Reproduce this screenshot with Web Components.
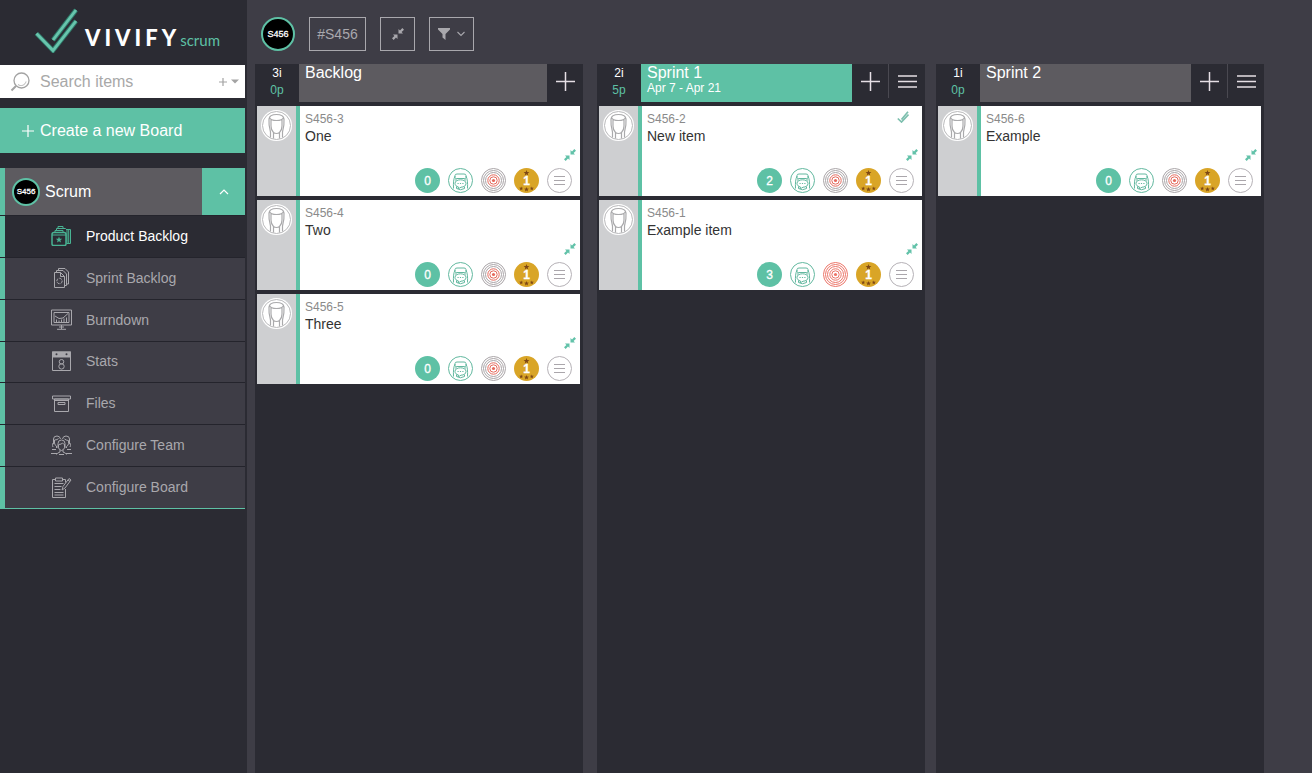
<!DOCTYPE html>
<html lang="en">
<head>
<meta charset="utf-8">
<title>VivifyScrum - Product Backlog</title>
<style>
  :root {
    --ground: #3e3d46;
    --dark: #2b2b33;
    --slate: #5d5b60;
    --green: #5ec1a5;
    --line: #24242c;
    --muted: #a9a8ad;
  }
  body { margin: 0; background: var(--ground); color: #fff; font: 14px/18px "Liberation Sans", Arial, sans-serif; }
</style>
</head>
<body>
<vs-app>
  <vs-sidebar slot="sidebar">
    <vs-nav-item icon="backlog" active>Product Backlog</vs-nav-item>
    <vs-nav-item icon="sprint">Sprint Backlog</vs-nav-item>
    <vs-nav-item icon="burndown">Burndown</vs-nav-item>
    <vs-nav-item icon="stats">Stats</vs-nav-item>
    <vs-nav-item icon="files">Files</vs-nav-item>
    <vs-nav-item icon="team">Configure Team</vs-nav-item>
    <vs-nav-item icon="board">Configure Board</vs-nav-item>
  </vs-sidebar>
  <vs-toolbar></vs-toolbar>
  <vs-board>
    <vs-column class="backlog" items="3i" points="0p">
      <span slot="title">Backlog</span>
      <vs-card code="S456-3" count="0">One</vs-card>
      <vs-card code="S456-4" count="0">Two</vs-card>
      <vs-card code="S456-5" count="0">Three</vs-card>
    </vs-column>
    <vs-column items="2i" points="5p" current menu>
      <span slot="title">Sprint 1</span>
      <span slot="dates">Apr 7 - Apr 21</span>
      <vs-card code="S456-2" count="2" done>New item</vs-card>
      <vs-card code="S456-1" count="3" high>Example item</vs-card>
    </vs-column>
    <vs-column items="1i" points="0p" menu>
      <span slot="title">Sprint 2</span>
      <vs-card code="S456-6" count="0">Example</vs-card>
    </vs-column>
  </vs-board>
</vs-app>

<script>
const STAR = (x, y, r) => {
  let p = '';
  for (let i = 0; i < 10; i++) {
    const a = -Math.PI / 2 + i * Math.PI / 5, q = i % 2 ? r * 0.42 : r;
    p += (i ? 'L' : 'M') + (x + q * Math.cos(a)).toFixed(2) + ' ' + (y + q * Math.sin(a)).toFixed(2);
  }
  return p + 'Z';
};

const rings = (outer, inner) => `<circle cx="12.5" cy="12.5" r="12" stroke="${outer}"/><circle cx="12.5" cy="12.5" r="10" stroke="${outer}"/><circle cx="12.5" cy="12.5" r="8" stroke="${outer}"/><circle cx="12.5" cy="12.5" r="5.7" stroke="${inner}"/><circle cx="12.5" cy="12.5" r="3.7" stroke="${inner}"/><circle cx="12.5" cy="12.5" r="1.6" fill="${inner}" stroke="none"/>`;

const ICONS = {
  mark: [44, 46, '<path d="M2.5 26.5 19 43.5 42 14M19 33 42 3" stroke="#2f7d6c" stroke-width="4.600"/><path d="M2.5 26.5 19 43.5 42 14M19 33 42 3" stroke="#68c5ad" stroke-width="2.8"/>'],
  search: [20, 20, '<circle cx="11.5" cy="8.5" r="7.5" stroke-width="1.3"/><path d="M6 14 1.5 18.5" stroke-width="2"/><path d="M8 12.5a5 5 0 0 0 8-3" stroke-width=".8"/>'],
  smallplus: [8, 8, '<path d="M4 0v8M0 4h8" stroke-width="1.2"/>'],
  caret: [8, 5, '<path d="M0 .5h8L4 4.5Z" fill="currentColor" stroke="none"/>'],
  createplus: [12, 12, '<path d="M6 0v12M0 6h12" stroke-width="1.2"/>'],
  up: [10, 6, '<path d="m1 5 4-4 4 4" stroke-width="1.2"/>'],
  down: [8, 6, '<path d="m.5 1 3.5 3.5L7.500 1" stroke-width="1.1"/>'],
  plus: [19, 19, '<path d="M9.500 0v19M0 9.500h19" stroke-width="1.5"/>'],
  menu: [19, 13, '<path d="M0 1h19M0 6.500h19M0 12h19" stroke-width="1.7"/>'],
  filter: [12, 12, '<path d="M0 0h12v1.500L7.500 6v6L4.500 9.500V6L0 1.500Z" fill="currentColor" stroke="none"/>'],
  shrink: [12, 12, '<path d="M6.500 5.500V1l1.500 1.400L10.300 0 12 1.700 9.600 4 11 5.500ZM5.500 6.500V11L4 9.600 1.700 12 0 10.300 2.400 8 1 6.500Z" fill="currentColor" stroke="none"/>'],
  check: [12, 12, '<path d="M.8 7.500 4.500 11 11.500 3.500M4.500 8.500 11 .8" stroke="#7dbfae" stroke-width="1.700"/>'],
  backlog: [21, 21, '<path d="M7 3V1.500h5V3M5.500 6V3.500h9l1.500 1.500v13.500M15.500 4.500h4v14h-4M17.700 4.500v14"/><path d="M1 9.500q0-2 2-2h10q2 0 2 2v9.500q0 1.500-1.500 1.500h-11Q1 20.500 1 19Z" stroke-width="1.500"/><path d="M4 7.500V5.500h8v2M1 10h14"/><path d="' + STAR(8, 14.800, 3.400) + '" fill="currentColor" stroke="none"/>'],
  sprint: [21, 21, '<path d="M3.500 5.500h6l4 4v11h-10ZM9.500 5.500v4h4M5.500 5V3.500h6.500l3.500 3.500v11.500h-1.500M7.500 3V1.500h6.500l3.500 3.500v12h-1.500"/><circle cx="8.500" cy="14" r="2.700" stroke-dasharray="3 1"/>'],
  burndown: [21, 21, '<path d="M.5 1h20v15H.5ZM3 3.500h15v10H3ZM10.500 16v4M6 20.300h9M8 18h5"/><path d="m4 7 4 2.500 4-.5 5-4.500M5.500 10.500v3M8 11.500v2M10.500 10.500v3M13 9.500v4M15.500 8.500v5"/>'],
  stats: [21, 21, '<path d="M1.500 1h18v18.500h-18Z"/><path d="M1 .500h19v6H1Z" fill="currentColor" stroke="none"/><circle cx="5.500" cy="3.300" r="1" fill="#3e3d46" stroke="none"/><circle cx="15.500" cy="3.300" r="1" fill="#3e3d46" stroke="none"/><circle cx="10.500" cy="10.800" r="2.300"/><circle cx="10.500" cy="15.400" r="2.700"/>'],
  files: [21, 21, '<path d="M1.500 3h18v3h-18ZM3.500 6h14v12.500h-14ZM7 9.500h7v2H7ZM4 7.500h13"/>'],
  team: [21, 21, '<path d="M2.500 9V4q0-3 3.500-3 3 0 3.500 3M3.500 5q3 0 4-1.500M3.500 5v3q0 2 2 3v2M2 8q-1 3 0 4M11.500 4q.5-3 3.500-3 3.500 0 3.500 3v5M13.500 4q2 1.500 4 1.500v3q0 2-2 3V13M19 8q1 3 0 4"/><path d="M7 13V8.500Q7 5 10.500 5T14 8.500V13M7.500 9.500q3 0 4-1.500 1 1.500 2.500 1.500M7.500 10v2.500q0 2 3 3 3-1 3-3V10M9 15v2q-3 1-3.500 2.500M12 15v2q3 1 3.500 2.500M0 18.500h6M15 18.500h6M1 14.500h4M16 14.500h4M8 19.500h5"/>'],
  board: [21, 21, '<path d="M4.500 2.500H1.500v18h13V12M11.500 2.500h3v3M4.500 1h7v3h-7ZM3.500 6.500h9M3.500 9.500h7M3.500 12.500h6M3.500 15.500h9M3.500 18h9"/><path d="m11 13 1-3.500 6-8 2 1.500-6 8ZM17 3l2 1.500"/>'],
  person: [31, 31, '<circle cx="15.500" cy="15.500" r="15.500" fill="#fff" stroke="none"/><circle cx="15.500" cy="15.500" r="14" stroke="#b9b9bb"/><path d="M9.500 27.500V22Q7.500 15 8 9q.5-4.500 7.500-4.500T23 9q.5 6-1.500 13v5.500M8.500 7.500q1 3 7 3t7-3M10 10v6q0 4 2.500 6.500v6M21 10v6q0 4-2.500 6.500v6M12.500 22.500q3 2 6 0" stroke="#aaaaac" stroke-width="1.200"/>'],
  talk: [25, 25, '<circle cx="12.500" cy="12.500" r="12" fill="#fff"/><path d="M7 7.500Q7 6 9 6h7q2 0 2 1.500v2q0 1-1.500 1h-8Q7 10.500 7 9.500ZM7 8Q5 12 5.500 20.500M18 8q2 4 1.500 12.500M8 10.500V13M17 10.500V13M8.500 18.500v2q4 2.500 8 0v-2"/><path d="M12.500 11.800c3.300 0 5.500 1.500 5.500 3.700s-2.200 3.700-5 3.700c-1 .8-2 1.300-3 1.300l.5-1.500c-2.200-.5-3.500-1.800-3.500-3.500 0-2.200 2.200-3.700 5.500-3.700Z" fill="#fff"/><path d="M9.500 15.500h1.200M11.900 15.500h1.200M14.300 15.500h1.200"/>'],
  target: [25, 25, rings('#a9a4a7', '#e5695c')],
  targethigh: [25, 25, rings('#ec7468', '#ec7468')],
  medal: [25, 25, `<circle cx="12.5" cy="12.5" r="12.5" fill="#d9a527" stroke="none"/><path d="${STAR(12.500, 5, 3)}${STAR(12.500, 21.500, 2.600)}${STAR(7.200, 20.500, 2.100)}${STAR(17.800, 20.500, 2.100)}" fill="#7d4716" stroke="none"/>`],
  list: [25, 25, '<circle cx="12.500" cy="12.500" r="12" stroke="#b5b1b6" fill="#fff"/><path d="M7 8.500h11M7 12.500h11M7 16.500h11" stroke="#aaa6ab"/>']
};

const RESET = `
  :host, *, *::before, *::after { box-sizing: border-box; }
  button { margin: 0; padding: 0; border: 0; background: none; color: inherit; font: inherit; cursor: pointer; }
  a { color: inherit; text-decoration: none; }
`;

const define = (name, css, html) => customElements.define(name, class extends HTMLElement {
  connectedCallback() {
    if (this.shadowRoot) return;
    const root = this.attachShadow({ mode: 'open' });
    const tpl = document.createElement('template');
    tpl.innerHTML = `<style>${RESET}${css}</style>${html(this)}`;
    root.append(tpl.content.cloneNode(true));
  }
});

define('vs-icon', `
  :host { display: block; flex: none; }
  svg { display: block; fill: none; stroke: currentColor; }
`, el => {
  const [w, h, body] = ICONS[el.getAttribute('name')];
  return `<svg width="${w}" height="${h}" viewBox="0 0 ${w} ${h}" aria-hidden="true">${body}</svg>`;
});

define('vs-badge', `
  :host { display: flex; flex: none; align-items: center; justify-content: center; width: 34px; height: 34px;
    border: 2px solid var(--green); border-radius: 50%; background: #000; color: #fff; font-size: 9px; line-height: 12px; -webkit-text-stroke: .3px #fff; }
  :host([small]) { width: 28px; height: 28px; font-size: 8px; }
`, () => `<slot></slot>`);

define('vs-app', `
  :host { display: grid; grid-template-columns: 247px minmax(0, 1fr); min-height: 100vh; }
  main { display: flex; flex-direction: column; min-width: 0; }
`, () => `<slot name="sidebar"></slot><main><slot></slot></main>`);

define('vs-sidebar', `
  :host { display: block; padding-right: 2px; background: var(--dark); }
  .logo { display: flex; align-items: flex-start; gap: 7px; height: 65px; padding: 7px 0 0 34px; }
  .word { display: flex; align-items: baseline; padding-top: 15px; font-family: Lato, sans-serif; line-height: 32px; }
  .word b { font-size: 22px; font-weight: 900; letter-spacing: 4px; }
  .word span { color: var(--green); font-size: 15px; }
  .search { display: flex; align-items: center; height: 33px; padding: 0 6px 0 10px; background: #fff; color: #a3a3a3; }
  input { flex: 1; min-width: 0; height: 33px; margin-left: 10px; padding: 0; border: 0; outline: 0; background: none; color: #555; font: 16px/20px "Liberation Sans", Arial, sans-serif; }
  input::placeholder { color: #a8a8a8; opacity: 1; }
  .more { display: flex; align-items: center; gap: 4px; height: 33px; }
  .create { display: flex; align-items: center; gap: 6px; width: 100%; height: 45px; margin: 10px 0 15px; padding-left: 22px; background: var(--green); font-size: 16px; }
  .board { display: flex; height: 47px; border-left: 5px solid var(--green); background: var(--slate); }
  .name { display: flex; flex: 1; align-items: center; gap: 5px; padding-left: 7px; font-size: 16px; }
  .toggle { display: flex; align-items: center; justify-content: center; width: 43px; background: var(--green); }
  nav { display: grid; grid-auto-rows: 1fr; min-height: 294px; border-bottom: 1px solid var(--green); }
`, () => `
  <a class="logo" href="#home" aria-label="Vivify scrum">
    <vs-icon name="mark"></vs-icon>
    <span class="word"><b>VIVIFY</b><span>scrum</span></span>
  </a>
  <div class="search">
    <vs-icon name="search"></vs-icon>
    <input type="text" placeholder="Search items" aria-label="Search items">
    <button class="more" aria-label="Search options"><vs-icon name="smallplus"></vs-icon><vs-icon name="caret"></vs-icon></button>
  </div>
  <button class="create"><vs-icon name="createplus"></vs-icon>Create a new Board</button>
  <div class="board">
    <a class="name" href="#scrum"><vs-badge small>S456</vs-badge>Scrum</a>
    <button class="toggle" aria-label="Collapse board menu"><vs-icon name="up"></vs-icon></button>
  </div>
  <nav><slot></slot></nav>`);

define('vs-nav-item', `
  :host { display: block; border-top: 1px solid var(--line); background: var(--ground); color: var(--muted); }
  :host([active]) { background: var(--dark); color: #fff; }
  a { display: flex; align-items: center; gap: 14px; height: 100%; padding: 0 0 1px 46px; border-left: 5px solid var(--green); }
  :host([active]) vs-icon { color: #48b393; }
`, el => `<a href="#${el.getAttribute('icon')}"><vs-icon name="${el.getAttribute('icon')}"></vs-icon><slot></slot></a>`);

define('vs-toolbar', `
  :host { display: flex; align-items: flex-start; gap: 14px; height: 64px; padding: 17px 14px 0; color: #a9a8ad; }
  button { display: flex; align-items: center; justify-content: center; gap: 7px; height: 34px; border: 1px solid #a9a8ad; }
  .tag { width: 57px; }
  .fit { width: 35px; }
  .filter { width: 45px; }
`, () => `
  <vs-badge>S456</vs-badge>
  <button class="tag">#S456</button>
  <button class="fit" aria-label="Collapse all"><vs-icon name="shrink"></vs-icon></button>
  <button class="filter" aria-label="Filter"><vs-icon name="filter"></vs-icon><vs-icon name="down"></vs-icon></button>`);

define('vs-board', `
  :host { display: flex; flex: 1; gap: 11px; padding: 0 48px 0 8px; }
  ::slotted(vs-column) { flex: 1 1 0; }
  ::slotted(.backlog) { margin-right: 3px; }
`, () => `<slot></slot>`);

define('vs-column', `
  :host { display: flex; flex-direction: column; min-width: 0; background: var(--dark); }
  header { display: flex; align-items: flex-start; height: 38px; margin-bottom: 4px; }
  .sum { width: 44px; padding-top: 1px; font-size: 12px; line-height: 17px; text-align: center; }
  .sum div + div { color: var(--green); }
  .title { flex: 1; min-width: 0; height: 38px; padding-left: 6px; background: var(--slate); }
  :host([current]) .title { background: var(--green); }
  h2 { margin: 0; font-size: 16px; font-weight: 400; line-height: 18px; }
  .dates { font-size: 12px; line-height: 12px; }
  button { display: flex; align-items: center; justify-content: center; width: 36px; height: 34px; color: #e6dfe5; }
  .menu { width: 37px; border-left: 1px solid #4a4951; }
  .cards { display: flex; flex-direction: column; gap: 4px; padding: 0 3px 0 2px; }
`, el => `
  <header>
    <div class="sum"><div>${el.getAttribute('items')}</div><div>${el.getAttribute('points')}</div></div>
    <div class="title"><h2><slot name="title"></slot></h2><div class="dates"><slot name="dates"></slot></div></div>
    <button aria-label="Add item"><vs-icon name="plus"></vs-icon></button>
    ${el.hasAttribute('menu') ? '<button class="menu" aria-label="Sprint menu"><vs-icon name="menu"></vs-icon></button>' : ''}
  </header>
  <div class="cards"><slot></slot></div>`);

define('vs-card', `
  :host { display: flex; height: 90px; background: #fff; color: #333; }
  .who { width: 43px; padding: 4px 0 0 4px; border-right: 4px solid var(--green); background: #cecfd1; }
  .body { display: flex; flex: 1; flex-direction: column; min-width: 0; padding: 5px 0 3px 5px; }
  .top { display: flex; justify-content: space-between; padding-right: 13px; color: #8a8a8a; font-size: 12px; line-height: 16px; }
  h3 { margin: 0; font-size: 14px; font-weight: 400; line-height: 18px; }
  .fit { align-self: flex-end; margin: 4px 4px auto 0; color: #62c2a9; }
  .tools { display: flex; justify-content: flex-end; gap: 8px; padding-right: 8px; color: #62b89f; }
  .tools button { display: grid; place-items: center; width: 25px; height: 25px; border-radius: 50%; }
  .count { background: var(--green); }
  .count, .rank { color: #fff; font-size: 12px; line-height: 14px; -webkit-text-stroke: .3px #fff; }
  .rank > * { grid-area: 1 / 1; }
  .rank span { z-index: 1; font-weight: 700; }
`, el => `
  <div class="who"><vs-icon name="person"></vs-icon></div>
  <div class="body">
    <div class="top"><span>${el.getAttribute('code')}</span>${el.hasAttribute('done') ? '<vs-icon name="check"></vs-icon>' : ''}</div>
    <h3><slot></slot></h3>
    <button class="fit" aria-label="Collapse card"><vs-icon name="shrink"></vs-icon></button>
    <div class="tools">
      <button class="count">${el.getAttribute('count')}</button>
      <button aria-label="Comments"><vs-icon name="talk"></vs-icon></button>
      <button aria-label="Priority"><vs-icon name="${el.hasAttribute('high') ? 'targethigh' : 'target'}"></vs-icon></button>
      <button class="rank"><vs-icon name="medal"></vs-icon><span>1</span></button>
      <button aria-label="Details"><vs-icon name="list"></vs-icon></button>
    </div>
  </div>`);
</script>
</body>
</html>
